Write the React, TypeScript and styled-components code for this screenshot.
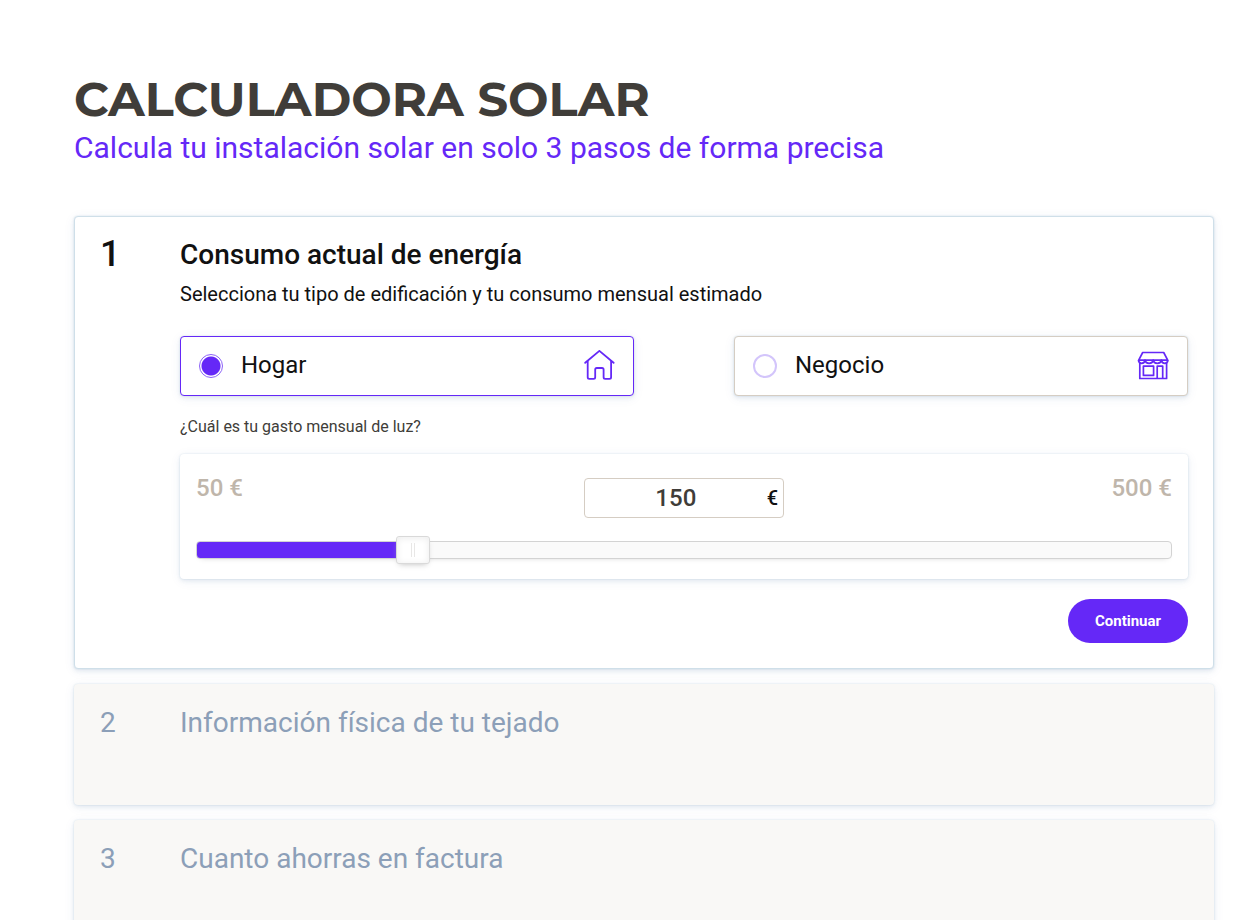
import { useState } from "react";
import type { ReactNode } from "react";
import styled, { createGlobalStyle } from "styled-components";

const violet = "#6528f7";
const softShadow = "0 0 2px rgba(20, 90, 150, 0.14), 0 2px 4px rgba(20, 70, 120, 0.08), 0 2px 12px rgba(20, 90, 150, 0.07)";
const MIN = 50;
const MAX = 500;

const GlobalStyle = createGlobalStyle`
  *, *::before, *::after { box-sizing: border-box; }
  body {
    margin: 0;
    background: #fff;
    color: #111;
    font-family: Roboto, "Liberation Sans", sans-serif;
  }
  h1, h2, p { margin: 0; }
  input, button { font-family: inherit; }
`;

const Page = styled.main`
  padding: 75px 41px 40px 74px;
`;

const Title = styled.h1`
  font-family: Montserrat, Inter, sans-serif;
  font-size: 48px;
  line-height: 48px;
  font-weight: 700;
  color: #403d39;
`;

const Subtitle = styled.p`
  font-size: 30px;
  line-height: 50px;
  color: ${violet};
`;

const Steps = styled.div`
  display: flex;
  flex-direction: column;
  gap: 15px;
  margin-top: 43px;
`;

const StepCard = styled.section<{ $active?: boolean }>`
  display: grid;
  grid-template-columns: 80px 1fr;
  min-height: 121px;
  padding: ${(p) => (p.$active ? "20px 25px 25px" : "20px 26px")};
  border: ${(p) => (p.$active ? "1px solid #cfdfe9" : "0")};
  border-radius: 4px;
  background: ${(p) => (p.$active ? "#fff" : "#f9f8f6")};
  color: ${(p) => (p.$active ? "#111" : "#8c9fb8")};
  box-shadow: ${softShadow};
`;

const StepNumber = styled.span<{ $active?: boolean }>`
  font-size: ${(p) => (p.$active ? 36 : 28)}px;
  line-height: ${(p) => (p.$active ? 34 : 38)}px;
  font-weight: ${(p) => (p.$active ? 500 : 400)};
`;

const StepTitle = styled.h2<{ $active?: boolean }>`
  font-size: 28px;
  line-height: ${(p) => (p.$active ? 36 : 38)}px;
  font-weight: ${(p) => (p.$active ? 500 : 400)};
`;

const StepHint = styled.p`
  margin-top: 7px;
  font-size: 20px;
  line-height: 28px;
`;

const Options = styled.div`
  display: grid;
  grid-template-columns: 1fr 1fr;
  gap: 100px;
  margin-top: 28px;
`;

const Option = styled.label<{ $selected: boolean }>`
  display: flex;
  align-items: center;
  gap: 18px;
  height: 60px;
  padding: 0 18px;
  border: 1px solid ${(p) => (p.$selected ? violet : "#d5cdc3")};
  border-radius: 4px;
  background: #fff;
  box-shadow: ${softShadow};
  cursor: pointer;

  svg { margin-left: auto; }
`;

const OptionText = styled.span`
  padding-bottom: 2px;
  font-size: 24px;
  line-height: 32px;
`;

const Radio = styled.input`
  appearance: none;
  width: 24px;
  height: 24px;
  margin: 0;
  border: 2px solid #d3c5fb;
  border-radius: 50%;
  background: #fff;

  &:checked {
    border: 1px solid #8c62f8;
    background: radial-gradient(circle, ${violet} 9px, #fff 10px);
  }
`;

const Question = styled.label`
  display: block;
  margin-top: 19px;
  font-size: 16px;
  line-height: 24px;
  color: #403d39;
`;

const SpendPanel = styled.div`
  margin-top: 15px;
  padding: 24px 16px 20px;
  border-radius: 4px;
  box-shadow: ${softShadow};
`;

const SpendRow = styled.div`
  display: flex;
  justify-content: space-between;
  align-items: flex-start;
`;

const Limit = styled.span`
  flex: 1;
  font-size: 24px;
  line-height: 20px;
  font-weight: 500;
  color: #bfb6ab;

  &:last-child { text-align: right; }
`;

const AmountBox = styled.div`
  display: flex;
  align-items: center;
  width: 200px;
  height: 40px;
  padding-right: 5px;
  border: 1px solid #d5cdc3;
  border-radius: 4px;
  font-size: 20px;
  font-weight: 500;
`;

const AmountInput = styled.input`
  flex: 1;
  min-width: 0;
  padding: 0;
  border: 0;
  background: none;
  text-align: center;
  font-size: 24px;
  font-weight: 500;
  color: #403d39;
`;

const Track = styled.div`
  height: 18px;
  margin-top: 23px;
  border: 1px solid #d3d3d3;
  border-radius: 4px;
  background: linear-gradient(${violet}, ${violet}) 0 0 / var(--filled) 100% no-repeat #fafafa;
  box-shadow: 0 3px 6px -5px #bbb;
`;

const Slider = styled.input`
  appearance: none;
  display: block;
  width: calc(100% + 34px);
  height: 28px;
  margin: -6px -17px;
  background: none;
  cursor: pointer;

  &::-webkit-slider-thumb {
    appearance: none;
    width: 34px;
    height: 28px;
    border: 1px solid #d9d9d9;
    border-radius: 3px;
    background:
      linear-gradient(#e8e7e6, #e8e7e6) 14px 6px / 1px 14px no-repeat,
      linear-gradient(#e8e7e6, #e8e7e6) 17px 6px / 1px 14px no-repeat,
      #fff;
    box-shadow: inset 0 0 1px #fff, inset 0 1px 7px #ebebeb, 0 3px 6px -3px #bbb;
  }
`;

const Actions = styled.div`
  display: flex;
  justify-content: flex-end;
  margin-top: 20px;
`;

const ContinueButton = styled.button`
  width: 120px;
  height: 44px;
  border: 0;
  border-radius: 22px;
  background: ${violet};
  color: #fff;
  font-size: 15px;
  font-weight: 700;
  cursor: pointer;
`;

const HomeIcon = () => (
  <svg width="32" height="32" viewBox="0 0 32 32" fill="none" stroke={violet} strokeWidth="1.8" strokeLinecap="round" strokeLinejoin="round" aria-hidden="true">
    <path d="M2.2 12.8 16.4 .9l14.2 11.9" />
    <path d="M4.7 11v16.2a1.6 1.6 0 0 0 1.6 1.6h4.3a1.6 1.6 0 0 0 1.6-1.6v-7.6a1.6 1.6 0 0 1 1.6-1.6h5.2a1.6 1.6 0 0 1 1.6 1.6v7.6a1.6 1.6 0 0 0 1.6 1.6h4.3a1.6 1.6 0 0 0 1.6-1.6V11" />
  </svg>
);

const ShopIcon = () => (
  <svg width="32" height="32" viewBox="0 0 32 32" fill="none" stroke={violet} strokeWidth="1.7" strokeLinejoin="round" aria-hidden="true">
    <path d="M5.7 2.5h21l4 7.6h-29z" />
    <path d="M1.4 10.1q.5 3.2 3.2 3.2 3 0 3.4-3.2 .5 3.2 4.1 3.2 3.6 0 4.1-3.2 .5 3.2 4.1 3.2 3.6 0 4.1-3.2 .4 3.2 3.4 3.2 2.7 0 3.2-3.2" />
    <path d="M2.8 13.1v15.4h26.8V13.1" />
    <path d="M6.4 16.2h10.2v9.2H6.4zM20.2 28.5V16.2h5.5v12.3" />
  </svg>
);

type StepProps = { number: number; title: string; active?: boolean; children?: ReactNode };

const Step = ({ number, title, active, children }: StepProps) => (
  <StepCard $active={active}>
    <StepNumber $active={active}>{number}</StepNumber>
    <div>
      <StepTitle $active={active}>{title}</StepTitle>
      {children}
    </div>
  </StepCard>
);

const buildings = [
  { id: "hogar", label: "Hogar", icon: <HomeIcon /> },
  { id: "negocio", label: "Negocio", icon: <ShopIcon /> },
];

export default function App() {
  const [building, setBuilding] = useState("hogar");
  const [spend, setSpend] = useState(150);
  const filled = Math.min(100, Math.max(0, ((spend - MIN) / (MAX - MIN)) * 100));

  return (
    <>
      <GlobalStyle />
      <Page>
        <Title>CALCULADORA SOLAR</Title>
        <Subtitle>Calcula tu instalación solar en solo 3 pasos de forma precisa</Subtitle>
        <Steps>
          <Step number={1} title="Consumo actual de energía" active>
            <StepHint>Selecciona tu tipo de edificación y tu consumo mensual estimado</StepHint>
            <Options>
              {buildings.map((b) => (
                <Option key={b.id} $selected={building === b.id}>
                  <Radio type="radio" name="building" value={b.id} checked={building === b.id} onChange={() => setBuilding(b.id)} />
                  <OptionText>{b.label}</OptionText>
                  {b.icon}
                </Option>
              ))}
            </Options>
            <Question htmlFor="spend">¿Cuál es tu gasto mensual de luz?</Question>
            <SpendPanel>
              <SpendRow>
                <Limit>50 €</Limit>
                <AmountBox>
                  <AmountInput id="spend" type="text" inputMode="numeric" value={spend} onChange={(e) => setSpend(Number(e.target.value) || 0)} />
                  <span>€</span>
                </AmountBox>
                <Limit>500 €</Limit>
              </SpendRow>
              <Track style={{ "--filled": `${filled}%` } as React.CSSProperties}>
                <Slider type="range" aria-label="Gasto mensual de luz" min={MIN} max={MAX} step={1} value={spend} onChange={(e) => setSpend(Number(e.target.value))} />
              </Track>
            </SpendPanel>
            <Actions>
              <ContinueButton type="button">Continuar</ContinueButton>
            </Actions>
          </Step>
          <Step number={2} title="Información física de tu tejado" />
          <Step number={3} title="Cuanto ahorras en factura" />
        </Steps>
      </Page>
    </>
  );
}
